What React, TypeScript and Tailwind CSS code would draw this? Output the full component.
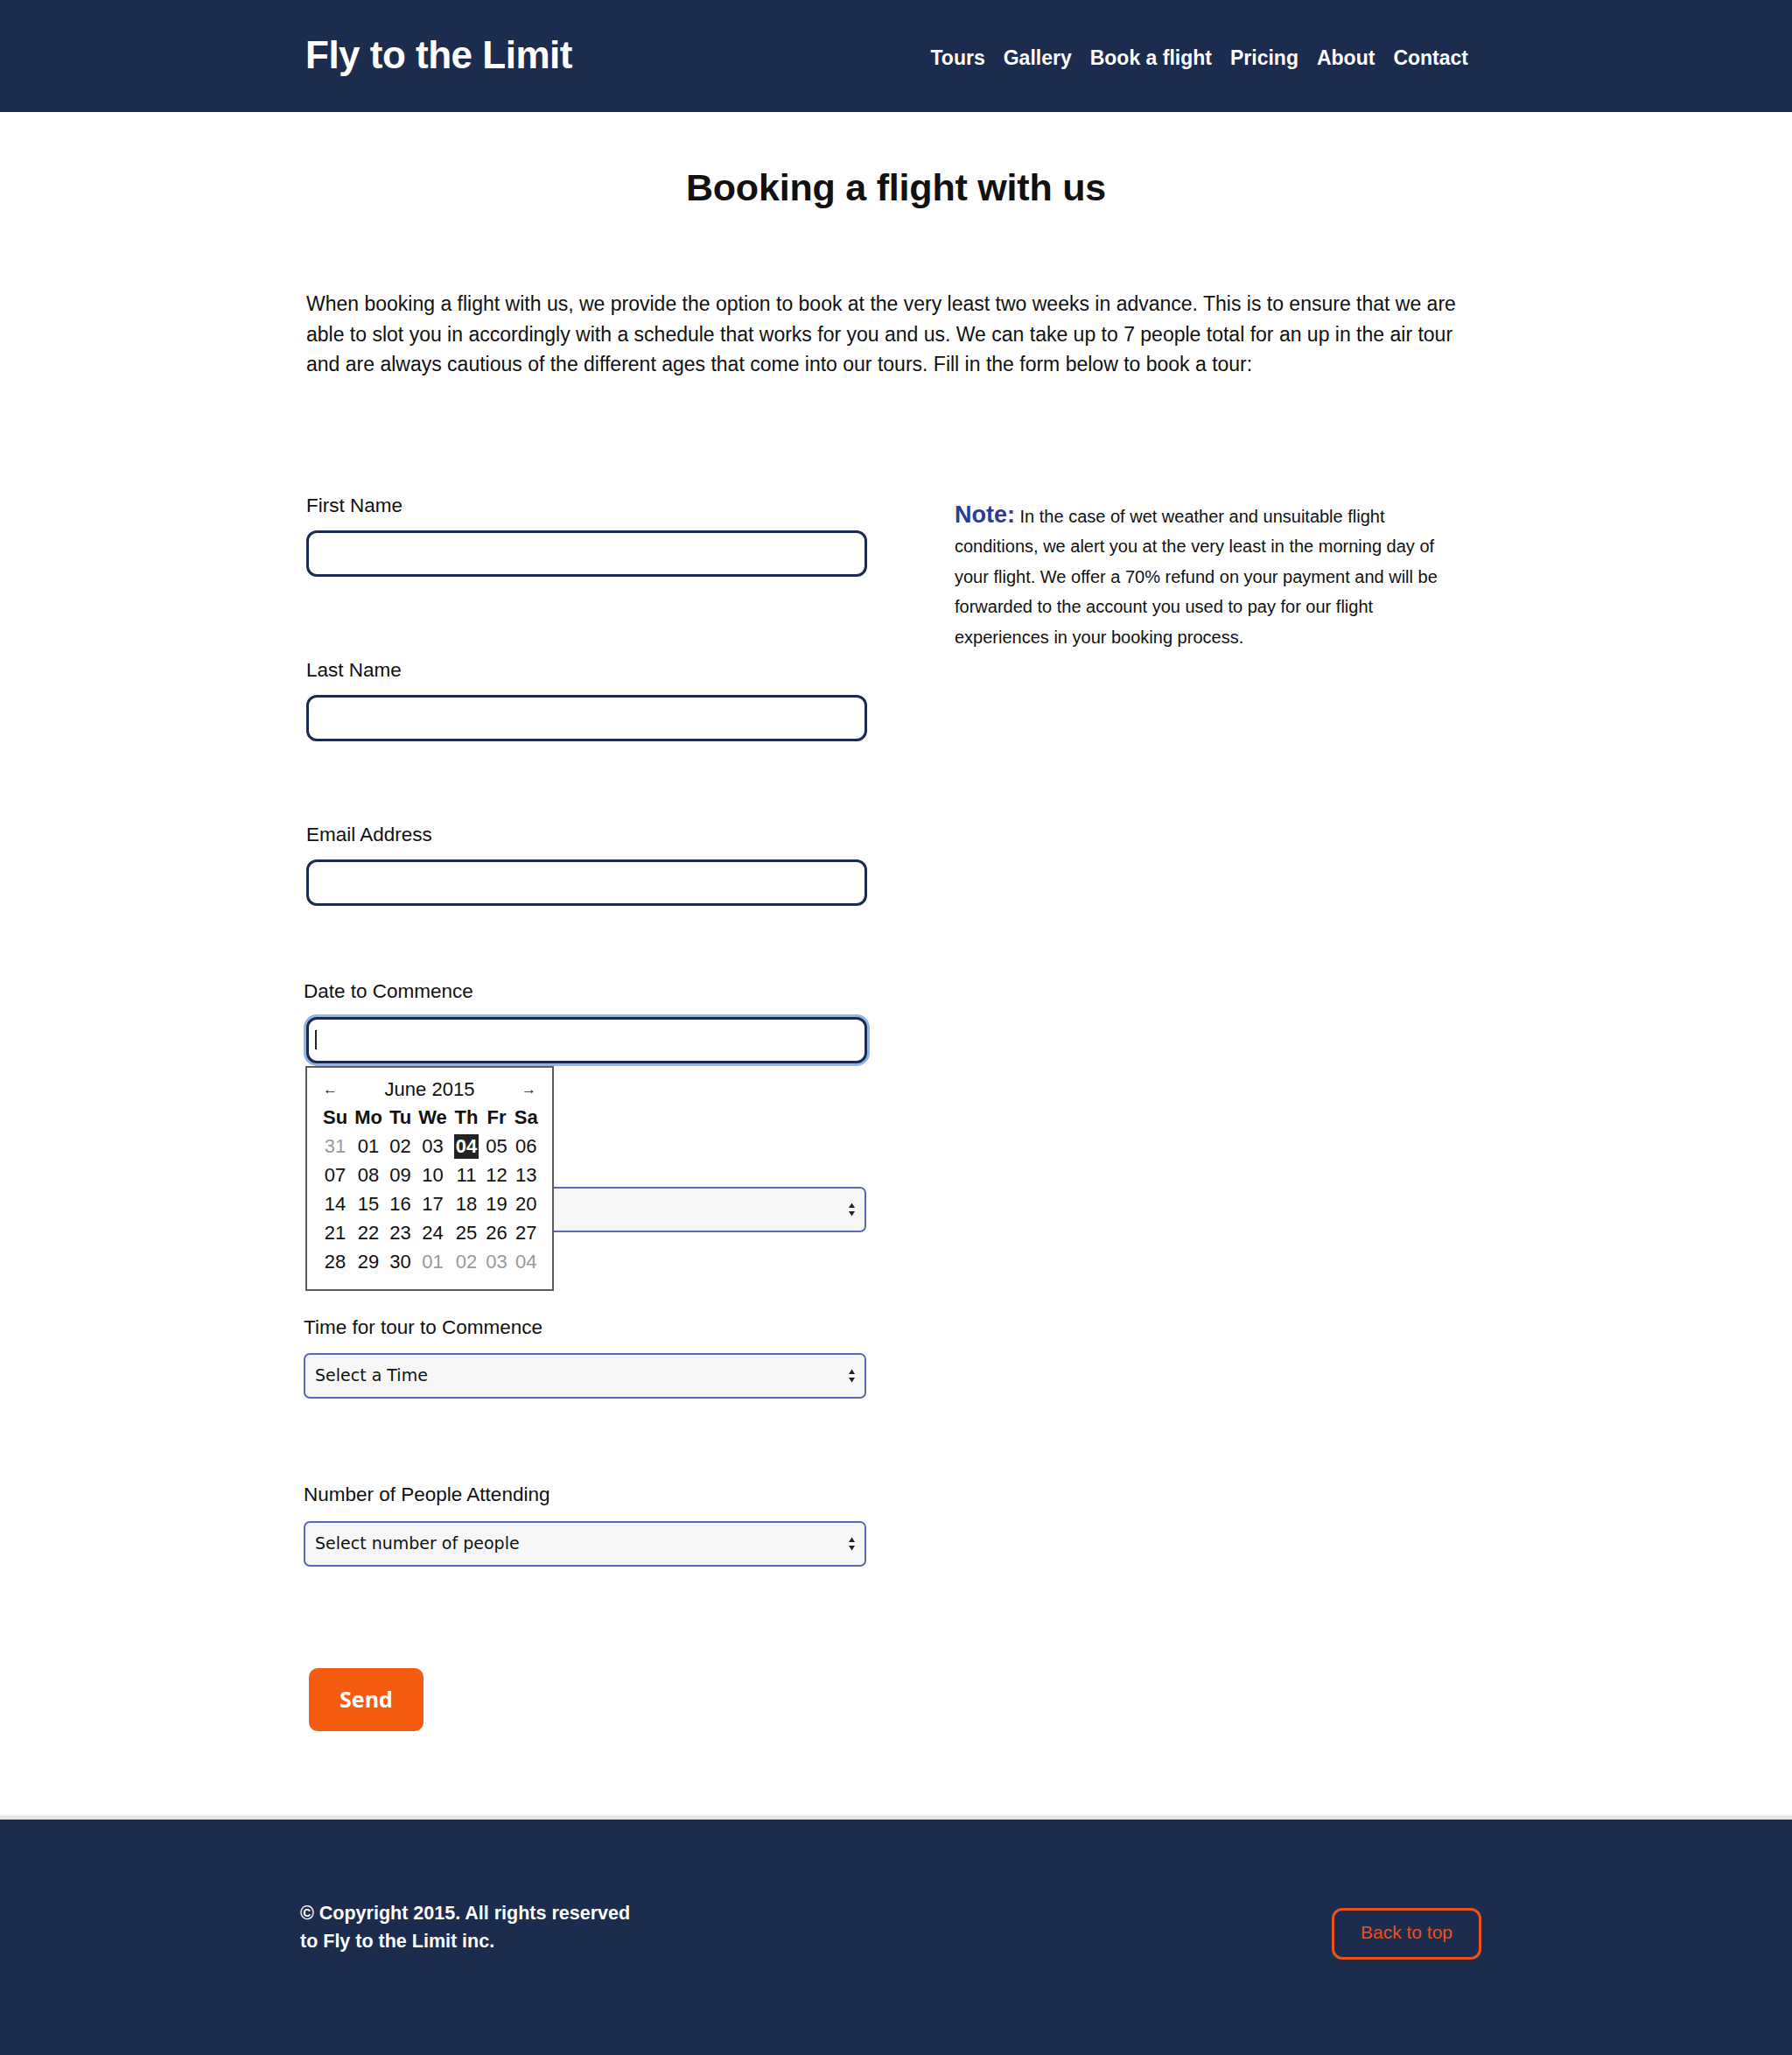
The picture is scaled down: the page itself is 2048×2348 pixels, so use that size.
import { FC, ReactNode } from "react";

const navLinks = ["Tours", "Gallery", "Book a flight", "Pricing", "About", "Contact"];

const weekDays = ["Su", "Mo", "Tu", "We", "Th", "Fr", "Sa"];

// [label, muted, selected]
const calendarRows: [string, boolean, boolean][][] = [
  [["31", true, false], ["01", false, false], ["02", false, false], ["03", false, false], ["04", false, true], ["05", false, false], ["06", false, false]],
  [["07", false, false], ["08", false, false], ["09", false, false], ["10", false, false], ["11", false, false], ["12", false, false], ["13", false, false]],
  [["14", false, false], ["15", false, false], ["16", false, false], ["17", false, false], ["18", false, false], ["19", false, false], ["20", false, false]],
  [["21", false, false], ["22", false, false], ["23", false, false], ["24", false, false], ["25", false, false], ["26", false, false], ["27", false, false]],
  [["28", false, false], ["29", false, false], ["30", false, false], ["01", true, false], ["02", true, false], ["03", true, false], ["04", true, false]],
];

const Label: FC<{ children: ReactNode }> = ({ children }) => (
  <label className="block h-[28px] text-[22.5px] leading-[28px] text-[#111]">{children}</label>
);

const TextInput: FC = () => (
  <input
    type="text"
    className="mt-[14px] block h-[53px] w-[641px] rounded-[12px] border-[3px] border-[#1c2b4d] bg-white px-3 outline-none"
  />
);

const SelectArrows: FC = () => (
  <svg
    width="9"
    height="17"
    viewBox="0 0 9 17"
    className="pointer-events-none absolute right-[12px] top-1/2 -translate-y-1/2"
  >
    <path d="M4.5 1 L8 6.5 L1 6.5 Z" fill="#222" />
    <path d="M4.5 16 L8 10.5 L1 10.5 Z" fill="#222" />
  </svg>
);

const FakeSelect: FC<{ placeholder: string; className?: string }> = ({ placeholder, className }) => (
  <div className={`relative ${className ?? ""}`}>
    <select
      defaultValue=""
      className="block h-[52px] w-full appearance-none rounded-[7px] border-2 border-[#5a68b9] bg-[#f7f7f7] pl-[11px] font-['DejaVu_Sans',sans-serif] text-[19px] text-[#111] outline-none"
    >
      <option value="">{placeholder}</option>
    </select>
    <SelectArrows />
  </div>
);

const Calendar: FC = () => (
  <div className="absolute left-[-1px] top-[56px] z-10 w-[284px] border-2 border-[#5c5c5c] bg-white px-[14px] pb-[15px] pt-[10px] text-[22px] text-[#111]">
    <div className="flex h-[30px] items-center justify-between px-[4px]">
      <span className="text-[17px] text-[#222]">←</span>
      <span>June 2015</span>
      <span className="text-[17px] text-[#222]">→</span>
    </div>
    <table className="border-collapse">
      <thead>
        <tr>
          {weekDays.map((d) => (
            <th key={d} className="h-[33px] px-[4px] text-center font-bold">
              {d}
            </th>
          ))}
        </tr>
      </thead>
      <tbody>
        {calendarRows.map((row, i) => (
          <tr key={i}>
            {row.map(([day, muted, selected], j) => (
              <td
                key={j}
                className={`h-[33px] px-[4px] text-center ${muted ? "text-[#9a9a9a]" : ""}`}
              >
                {selected ? (
                  <span className="inline-block bg-[#222] px-[2px] font-bold leading-[28px] text-white">
                    {day}
                  </span>
                ) : (
                  day
                )}
              </td>
            ))}
          </tr>
        ))}
      </tbody>
    </table>
  </div>
);

export default function App() {
  return (
    <div className="min-h-[2348px] bg-white font-['Liberation_Sans',Arial,sans-serif] text-[#111]">
      {/* header */}
      <header className="h-[128px] bg-[#1b2c4f]">
        <div className="mx-auto flex h-full w-[1350px] items-center justify-between pr-[21px]">
          <a className="-mt-[3px] text-[44px] font-bold tracking-[-0.5px] text-white">Fly to the Limit</a>
          <nav className="mt-[4px] flex gap-[21px] text-[23px] font-bold text-white">
            {navLinks.map((link) => (
              <a key={link}>{link}</a>
            ))}
          </nav>
        </div>
      </header>

      <main className="mx-auto w-[1350px] pb-[96px] pt-[61px]">
        <h1 className="text-center text-[43px] font-bold leading-[50px] tracking-[-0.2px]">
          Booking a flight with us
        </h1>
        <p className="mt-[91px] max-w-[1330px] pl-[1px] text-[23px] leading-[34.5px]">
          When booking a flight with us, we provide the option to book at the very least two weeks in advance. This is to
          ensure that we are able to slot you in accordingly with a schedule that works for you and us. We can take up to 7
          people total for an up in the air tour and are always cautious of the different ages that come into our tours.
          Fill in the form below to book a tour:
        </p>

        <div className="mt-[130px] flex">
          {/* form column */}
          <form className="-ml-[2px] w-[645px]" onSubmit={(e) => e.preventDefault()}>
            <div className="pl-[3px]">
              <Label>First Name</Label>
              <TextInput />
            </div>
            <div className="mt-[93px] pl-[3px]">
              <Label>Last Name</Label>
              <TextInput />
            </div>
            <div className="mt-[93px] pl-[3px]">
              <Label>Email Address</Label>
              <TextInput />
            </div>

            <div className="mt-[84px]">
              <Label>Date to Commence</Label>
              <div className="relative ml-[3px] mt-[15px] w-[641px]">
                <div className="flex h-[53px] items-center rounded-[12px] border-[3px] border-[#1c2b4d] bg-white shadow-[0_0_0_3px_#8fb6ec]">
                  <span className="ml-[7px] h-[22px] w-[2px] bg-[#222]" />
                </div>
                <Calendar />
              </div>
            </div>

            {/* this field sits under the open date picker */}
            <div className="mt-[98px] pl-[4px]">
              <div className="h-[28px]" />
              <FakeSelect placeholder="" className="mt-[15px] w-[639px]" />
            </div>

            <div className="mt-[95px]">
              <Label>Time for tour to Commence</Label>
              <FakeSelect placeholder="Select a Time" className="mt-[15px] w-[643px]" />
            </div>

            <div className="mt-[96px]">
              <Label>Number of People Attending</Label>
              <FakeSelect placeholder="Select number of people" className="mt-[16px] w-[643px]" />
            </div>

            <button
              type="submit"
              className="ml-[6px] mt-[116px] h-[72px] w-[131px] rounded-[10px] bg-[#f45b11] font-['Open_Sans',sans-serif] text-[25px] font-bold text-white"
            >
              Send
            </button>
          </form>

          {/* note column */}
          <aside className="ml-[99px] mt-[7px] w-[570px] text-[20px] leading-[34.5px] text-[#111]">
            <span className="text-[27px] font-bold text-[#2c3b94]">Note:</span> In the case of wet weather and unsuitable
            flight conditions, we alert you at the very least in the morning day of your flight. We offer a 70% refund on
            your payment and will be forwarded to the account you used to pay for our flight experiences in your booking
            process.
          </aside>
        </div>
      </main>

      {/* footer */}
      <footer className="h-[276px] border-t-[5px] border-[#e6e6e6] bg-[#1b2c4f]">
        <div className="mx-auto flex w-[1362px] items-start justify-between pr-[12px] pt-[91px]">
          <p className="text-[21.5px] font-bold leading-[32px] text-white">
            © Copyright 2015. All rights reserved
            <br />
            to Fly to the Limit inc.
          </p>
          <a
            href="#top"
            className="mt-[10px] flex h-[59px] w-[171px] items-center justify-center rounded-[12px] border-[3px] border-[#ea521a] pb-[3px] text-[21px] text-[#ea521a]"
          >
            Back to top
          </a>
        </div>
      </footer>
    </div>
  );
}
